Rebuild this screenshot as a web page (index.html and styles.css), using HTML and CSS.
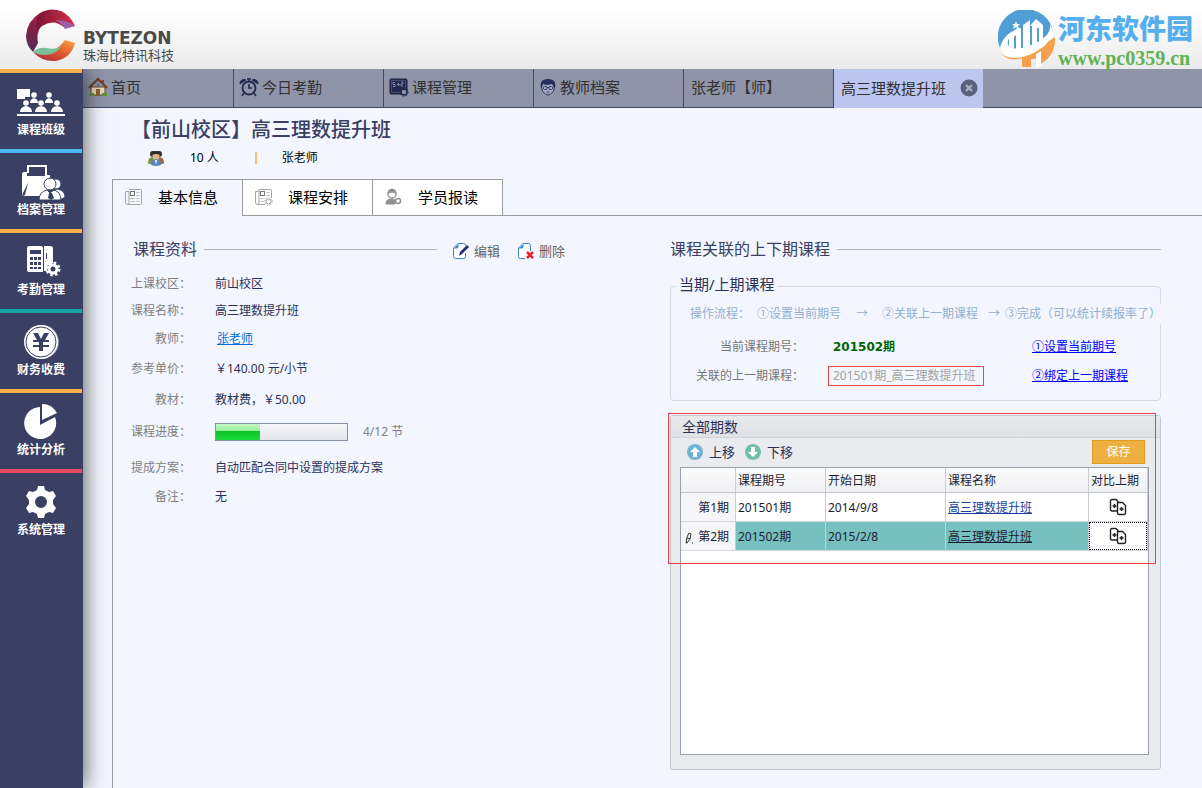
FILE: index.html
```html
<!DOCTYPE html>
<html lang="zh-CN">
<head>
<meta charset="utf-8">
<title>高三理数提升班</title>
<link rel="stylesheet" href="styles.css">
</head>
<body>
<header class="topbar">
  <div class="brand">
    <svg class="brand-mark" viewBox="0 0 52 54" aria-hidden="true">
      <defs>
        <linearGradient id="g1" x1="0" y1="0" x2="1" y2="0"><stop offset="0" stop-color="#7a1537"/><stop offset="1" stop-color="#d8304a"/></linearGradient>
        <linearGradient id="g2" x1="0" y1="0" x2="0" y2="1"><stop offset="0" stop-color="#a81a40"/><stop offset="1" stop-color="#4e2c52"/></linearGradient>
        <linearGradient id="g3" x1="0" y1="1" x2="1" y2="0"><stop offset="0" stop-color="#a8203c"/><stop offset=".5" stop-color="#d9542f"/><stop offset="1" stop-color="#fda83c"/></linearGradient>
      </defs>
      <path d="M15 5Q2 13 1 28Q1 37 8 44L13 35Q10 18 24 7Z" fill="url(#g2)"/>
      <path d="M15 5Q25 -1 36 3Q45 7 50 18L40 20Q29 10 17 18Q13 21 13 27Q9 13 15 5Z" fill="url(#g1)"/>
      <path d="M30 12Q42 12 50 18L40 21Q36 14 30 12Z" fill="#9a62aa"/>
      <path d="M50 35Q46 50 31 53Q17 54 8 44Q29 48 40 32Z" fill="url(#g3)"/>
      <path d="M8 44Q13 39 21 40Q29 42 36 39Q30 47 20 47Q13 47 8 44Z" fill="#7bbf98"/>
    </svg>
    <div class="brand-text">
      <span class="brand-name">BYTEZON</span>
      <span class="brand-sub">珠海比特讯科技</span>
    </div>
  </div>
  <div class="partner">
    <svg class="partner-mark" viewBox="0 0 58 58" aria-hidden="true">
      <path d="M2 38A28 28 0 0 1 52 13Q55 18 54 22L30 40Z" fill="#4f9fd6"/>
      <path d="M57 27Q58 48 38 56V49H33V57H24V48Q14 52 6 46Q3 43 2 38Q20 48 38 38Q52 31 57 27Z" fill="#f4a04c"/>
      <path d="M11 38V26L19 18L23 18V39H18V25L16 27V38Z" fill="#fff"/>
      <path d="M25 38V15L32 10V36ZM34 35V16H32L38 9L45 15V30L41 33V18H39V34Z" fill="#fff"/>
      <path d="M2 38Q5 24 20 19Q8 28 10 35Q16 43 38 33Q54 25 52 14Q59 25 45 37Q26 51 10 47Q3 45 2 38Z" fill="#fff"/>
      <path d="M38 44l5-3v15l-5 2Z" fill="#fff"/>
      <path d="M18 11l1 3h3l-2 2 1 3-3-2-3 2 1-3-2-2h3Z" fill="#fff"/>
    </svg>
    <div class="partner-text">
      <span class="partner-name">河东软件园</span>
      <span class="partner-url">www.pc0359.cn</span>
    </div>
  </div>
</header>

<div class="shell">
  <nav class="sidebar" aria-label="主导航">
    <a class="side-item orange" href="#">
      <svg viewBox="0 0 48 36" aria-hidden="true" fill="#fff"><path d="M0 5h13v8H8v2H0Z"/><circle cx="17" cy="11" r="2.800"/><circle cx="32" cy="11" r="2.800"/><path d="M13 19q0-4 4-5 4 1 4 5Zm15 0q0-4 4-5 4 1 4 5Z"/><circle cx="9" cy="19" r="2.800"/><circle cx="24" cy="19" r="2.800"/><circle cx="40" cy="19" r="2.800"/><path d="M3 28q0-5 6-6 6 1 6 6Zm15 0q0-5 6-6 6 1 6 6Zm16 0q0-5 6-6 6 1 6 6ZM0 30h48v2H0Z"/></svg>
      <span>课程班级</span>
    </a>
    <a class="side-item blue" href="#">
      <svg viewBox="0 0 48 36" aria-hidden="true" fill="#fff"><path d="M11 9V2h18v9" fill="none" stroke="#fff" stroke-width="2"/><path d="M5 32V10q0-2 2-2h3v4h18v-1h5v5l-21 1-6 12Z"/><path d="M8 31l4-16h25v4L25 32H6Z"/><g stroke="#394063"><circle cx="39" cy="20" r="5"/><path d="M35 35q-1-9 5-10 8 1 8 8l-3 2Z"/><circle cx="33" cy="20" r="6"/><path d="M22 36q0-8 8-10l3 3 4-3q7 2 7 10Z"/></g><path d="M32 29h3l2 5-3 2-3-2Z" fill="#394063"/></svg>
      <span>档案管理</span>
    </a>
    <a class="side-item orange" href="#">
      <svg viewBox="0 0 48 36" aria-hidden="true"><path d="M10 4q0-2 2-2h12q2 0 2 2v24H12q-2 0-2-2ZM27 2h6q3 0 3 2v15l-6 3v5h-3Z" fill="#fff"/><path d="M13 6h11v4H13ZM13 13h3v3h-3Zm4 0h3v3h-3Zm4 0h3v3h-3Zm-8 5h3v3h-3Zm4 0h3v3h-3Zm4 0h3v3h-3Zm-8 5h3v2h-3Zm4 0h3v2h-3Zm4 0h3v2h-3ZM29 9h1v6h-1Z" fill="#394063"/><circle cx="36" cy="25" r="4" fill="none" stroke="#fff" stroke-width="3"/><circle cx="36" cy="25" r="6" fill="none" stroke="#fff" stroke-width="3" stroke-dasharray="2.4 2.3"/></svg>
      <span>考勤管理</span>
    </a>
    <a class="side-item teal" href="#">
      <svg viewBox="0 0 48 36" aria-hidden="true"><circle cx="25" cy="18" r="17" fill="#8b90a5"/><circle cx="24" cy="18" r="17" fill="#fff"/><circle cx="24" cy="18" r="15" fill="none" stroke="#394063"/><path d="M16 9h5l3 6 3-6h5l-4 7h4v2h-6v3h6v2h-6v4h-4v-4h-6v-2h6v-3h-6v-2h4Z" fill="#394063"/></svg>
      <span>财务收费</span>
    </a>
    <a class="side-item orange" href="#">
      <svg viewBox="0 0 48 36" aria-hidden="true" fill="#fff"><path d="M23 3v18l15-8A16 16 0 1 1 23 3Z"/><path d="M25 0q10 0 15 9l-15 7Z"/></svg>
      <span>统计分析</span>
    </a>
    <a class="side-item red" href="#">
      <svg viewBox="0 0 48 36" aria-hidden="true"><path fill="#fff" fill-rule="evenodd" d="M21 2h6l1 4 4 2 4-1 3 5-3 4v4l3 4-3 5-4-1-4 2-1 4h-6l-1-4-4-2-4 1-3-5 3-4v-4l-3-4 3-5 4 1 4-2ZM24 12a6 6 0 1 0 0 12 6 6 0 0 0 0-12Z"/></svg>
      <span>系统管理</span>
    </a>
  </nav>

  <div class="main">
    <nav class="window-tabs" aria-label="窗口">
      <a class="window-tab" href="#">
        <svg class="tab-icon" viewBox="0 0 20 20" aria-hidden="true"><path d="M3 10h14v8H3Z" fill="#e8d8b8" stroke="#67442a"/><path d="M1 11 10 2l9 9" fill="none" stroke="#6d4529" stroke-width="2.4"/><path d="M14 3h2v4h-2Z" fill="#8c3f28"/><path d="M8 12h4v7H8Z" fill="#8d5e30"/><path d="M1 16h5v3H1Zm13 0h5v3h-5Z" fill="#5d9736"/><circle cx="10" cy="8" r="1.4" fill="#59728a"/></svg>
        <span>首页</span>
      </a>
      <a class="window-tab" href="#">
        <svg class="tab-icon" viewBox="0 0 20 20" fill="none" stroke="#232a50" aria-hidden="true"><circle cx="10" cy="11" r="6.5" stroke-width="1.8"/><path d="M10 7v4h3M5 16l-2 3M15 16l2 3M8 2h4M10 2v2" stroke-width="1.6"/><path d="M1 7a4 4 0 0 1 6-4ZM19 7a4 4 0 0 0-6-4Z" fill="#232a50"/></svg>
        <span>今日考勤</span>
      </a>
      <a class="window-tab" href="#">
        <svg class="tab-icon" viewBox="0 0 20 20" fill="none" aria-hidden="true"><rect x="1" y="2" width="17" height="15" rx="1" fill="#232a50" stroke="#1c2240"/><path d="M2.500 3.500h14v12h-14Z" stroke="#5d6488" stroke-width=".6"/><path d="M6 5.500H4v2h2v2H4M8 7.500h3M9.500 6v3M12 5h2v2h-2v2h2" stroke="#8f96b4" stroke-width=".8"/><circle cx="15" cy="15" r="3" fill="#9094a9" stroke="#232a50" stroke-width="1.600"/><circle cx="15" cy="15" r="4.300" stroke="#232a50" stroke-dasharray="1.500 1.800"/></svg>
        <span>课程管理</span>
      </a>
      <a class="window-tab" href="#">
        <svg class="tab-icon small" viewBox="0 0 16 18" fill="none" aria-hidden="true"><path d="M1.500 9q-1-7 6.500-7t6.500 7q0 5-4 7-2.500 2-5 0-4-2-4-7Z" fill="#a9afc9" stroke="#27305c"/><path d="M1 10Q-1 1 8 1t7 9h-1l-2-4Q7 8 3 6L2 10Z" fill="#27305c"/><rect x="3.500" y="8.500" width="3.500" height="3" rx="1" stroke="#27305c"/><rect x="9" y="8.500" width="3.500" height="3" rx="1" stroke="#27305c"/><path d="M7 9.500h2M6.500 14h3" stroke="#27305c"/></svg>
        <span>教师档案</span>
      </a>
      <a class="window-tab" href="#"><span>张老师【师】</span></a>
      <div class="window-tab active">
        <a href="#">高三理数提升班</a>
        <button class="close" type="button" aria-label="关闭"><svg viewBox="0 0 18 18" aria-hidden="true"><circle cx="9" cy="9" r="8.500" fill="#5c617b"/><path d="M6 6l6 6M12 6l-6 6" stroke="#a8aec9" stroke-width="2.400"/></svg></button>
      </div>
    </nav>

    <main class="page">
      <h1 class="title">【前山校区】高三理数提升班</h1>
      <div class="summary">
        <svg class="people" viewBox="0 0 16 16" aria-hidden="true"><circle cx="5" cy="4" r="3" fill="#35302e"/><circle cx="11" cy="4" r="3" fill="#35302e"/><path d="M0 13q0-6 5-6l2 7H1Z" fill="#769447"/><path d="M16 13q0-6-5-6l-2 7h6Z" fill="#9a6a48"/><circle cx="8" cy="6" r="3.600" fill="#e0b789"/><path d="M4 5q0-4 4-4t4 4Q8 3 4 5Z" fill="#302a29"/><path d="M3 15q0-6 5-6t5 6q-5 2-10 0Z" fill="#5488c0"/><path d="M7 10h2l-1 5Z" fill="#fff"/></svg>
        <span class="count">10 人</span>
        <span class="divider"></span>
        <span>张老师</span>
      </div>

      <div class="detail-tabs" role="tablist">
        <button class="detail-tab selected" type="button" role="tab" aria-selected="true">
          <svg viewBox="0 0 18 18" fill="none" stroke="#a5a5a5" aria-hidden="true"><path d="M4 1.500h11.500q1 0 1 1v13q0 1-1 1h-13q-2 0-2-2v-11H4v11q0 2-1.500 2" /><rect x="5.500" y="3.500" width="4" height="4" stroke="#777"/><path d="M11.500 4.500h3M11.500 7.500h3M5.500 10.500h4M11.500 10.500h3M5.500 13.500h4M11.500 13.500h3" stroke="#bbb"/></svg>
          <span>基本信息</span>
        </button>
        <button class="detail-tab" type="button" role="tab">
          <svg viewBox="0 0 18 18" fill="none" stroke="#a5a5a5" aria-hidden="true"><path d="M10 16.500H2.500q-2 0-2-2v-11H4v11q0 2-1.500 2M4 3.500v-2h11.500q1 0 1 1V10"/><rect x="5.500" y="3.500" width="4" height="4" stroke="#777"/><path d="M11.500 4.500h3M11.500 7.500h3M5.500 10.500h4M5.500 13.500h3" stroke="#bbb"/><circle cx="13.500" cy="13.500" r="2.500"/><circle cx="13.500" cy="13.500" r="3.700" stroke-dasharray="1.500 1.400"/></svg>
          <span>课程安排</span>
        </button>
        <button class="detail-tab" type="button" role="tab">
          <svg viewBox="0 0 18 18" fill="none" stroke="#929292" aria-hidden="true"><circle cx="7" cy="6" r="4" stroke-width="1.500"/><path d="M3 5q0-4 4-4t4 4Q7 3 3 5Z" fill="#929292"/><path d="M1 16q0-5 5-5 3 0 4 1v4Z" fill="#929292"/><circle cx="13" cy="13" r="2.500" fill="#fff" stroke-width="1.500"/></svg>
          <span>学员报读</span>
        </button>
        <span class="tab-line"></span>
      </div>

      <div class="pane">
        <section class="info">
          <div class="section-head">
            <h2>课程资料</h2><span class="rule"></span>
            <div class="actions">
              <button class="action" type="button"><svg viewBox="0 0 16 16" aria-hidden="true"><path d="M12.500 10v3.500q0 2-2 2h-8q-2 0-2-2V5L5 .500h5.500q2 0 2 2" fill="#fff" stroke="#3f84c5"/><path d="M1 5.500h2.500q2 0 2-2V1Z" fill="#3f84c5"/><path d="M6 13l1-4 7-7 2 2-7 7Z" fill="#252b6d"/></svg><span>编辑</span></button>
              <button class="action" type="button"><svg viewBox="0 0 16 16" aria-hidden="true"><path d="M7 15.500H2.500q-2 0-2-2V5L5 .500h5.500q2 0 2 2V8" fill="#fff" stroke="#3f84c5"/><path d="M1 5.500h2.500q2 0 2-2V1Z" fill="#3f84c5"/><path d="M9 9l6 6M15 9l-6 6" stroke="#ed242b" stroke-width="2.500"/></svg><span>删除</span></button>
            </div>
          </div>
          <dl class="fields">
            <dt>上课校区：</dt><dd>前山校区</dd>
            <dt>课程名称：</dt><dd>高三理数提升班</dd>
            <dt>教师：</dt><dd><a class="teacher" href="#">张老师</a></dd>
            <dt>参考单价：</dt><dd>￥140.00 元/小节</dd>
            <dt>教材：</dt><dd>教材费，￥50.00</dd>
            <dt id="progress-label">课程进度：</dt><dd class="progress-row"><progress max="12" value="4" aria-labelledby="progress-label"></progress><span>4/12 节</span></dd>
            <dt>提成方案：</dt><dd>自动匹配合同中设置的提成方案</dd>
            <dt>备注：</dt><dd>无</dd>
          </dl>
        </section>

        <section class="related">
          <div class="section-head"><h2>课程关联的上下期课程</h2><span class="rule"></span></div>
          <fieldset class="link-box">
            <legend>当期/上期课程</legend>
            <div class="steps"><span class="steps-label">操作流程：</span><span>①设置当前期号</span><span class="arrow-wide">→</span><span>②关联上一期课程</span><span class="arrow">→</span><span>③完成（可以统计续报率了）</span></div>
            <div class="link-grid">
              <span class="link-label">当前课程期号：</span><span class="current">201502期</span><a href="#">①设置当前期号</a>
              <span class="link-label">关联的上一期课程：</span><span class="previous">201501期_高三理数提升班</span><a href="#">②绑定上一期课程</a>
            </div>
          </fieldset>

          <div class="terms">
            <h3>全部期数</h3>
            <div class="toolbar">
              <button class="move" type="button"><svg viewBox="0 0 16 16" aria-hidden="true"><circle cx="8" cy="8" r="8" fill="#72b2d6"/><path d="M8 3l5 5h-3v5H6V8H3Z" fill="#fff"/></svg><span>上移</span></button>
              <button class="move" type="button"><svg viewBox="0 0 16 16" aria-hidden="true"><circle cx="8" cy="8" r="8" fill="#70c0a6"/><path d="M8 13l5-5h-3V3H6v5H3Z" fill="#fff"/></svg><span>下移</span></button>
              <button class="save" type="button">保存</button>
            </div>
            <div class="grid-box">
              <table>
                <colgroup><col class="c-index"><col class="c-term"><col class="c-date"><col class="c-name"><col class="c-compare"></colgroup>
                <thead><tr><td></td><th scope="col">课程期号</th><th scope="col">开始日期</th><th scope="col">课程名称</th><th scope="col">对比上期</th></tr></thead>
                <tbody>
                  <tr><th scope="row"><span>第1期</span></th><td>201501期</td><td>2014/9/8</td><td><a href="#">高三理数提升班</a></td>
                    <td class="compare"><button type="button" aria-label="对比上期"><svg viewBox="0 0 18 18" fill="#fff" stroke="#222" stroke-width="1.400" aria-hidden="true"><path d="M1.500 3q0-1.500 1.500-1.500h4l2 2V13H3q-1.500 0-1.500-1.500Z"/><path d="M8.500 4.500h5l3 3V15q0 1.500-1.500 1.500h-5q-1.500 0-1.500-1.500Z"/><path d="M3.500 8h4M5.500 6v4M10.500 11h4M12.500 9v4" stroke-width="1.600"/></svg></button></td></tr>
                  <tr class="chosen"><th scope="row"><svg class="pencil" viewBox="0 0 8 12" fill="none" stroke="#333" aria-hidden="true"><path d="M1 11l1-6 2-4 2 1-1 5-3 4ZM2 6l3 1M7 11h1"/></svg><span>第2期</span></th><td>201502期</td><td>2015/2/8</td><td><a href="#">高三理数提升班</a></td>
                    <td class="compare"><button type="button" aria-label="对比上期"><svg viewBox="0 0 18 18" fill="#fff" stroke="#222" stroke-width="1.400" aria-hidden="true"><path d="M1.500 3q0-1.500 1.500-1.500h4l2 2V13H3q-1.500 0-1.500-1.500Z"/><path d="M8.500 4.500h5l3 3V15q0 1.500-1.500 1.500h-5q-1.500 0-1.500-1.500Z"/><path d="M3.500 8h4M5.500 6v4M10.500 11h4M12.500 9v4" stroke-width="1.600"/></svg></button></td></tr>
                </tbody>
              </table>
            </div>
            <div class="marker"></div>
          </div>
        </section>
      </div>
    </main>
  </div>
</div>
</body>
</html>
```
FILE: styles.css
```css
* { box-sizing: border-box; }

body {
  margin: 0;
  min-height: 100vh;
  display: flex;
  flex-direction: column;
  background: #f3f6fe;
  color: #2b3158;
  font: 12px/20px "Noto Sans", "Noto Sans CJK SC", sans-serif;
}

h1, h2, h3, dl, dd { margin: 0; font-weight: normal; }
button { font: inherit; color: inherit; border: 0; padding: 0; background: none; cursor: pointer; }
svg { display: block; flex: none; }

/* Header */
.topbar {
  position: relative;
  z-index: 2;
  height: 69px;
  display: flex;
  justify-content: space-between;
  padding: 8px 9px 0 25px;
  background: linear-gradient(#fff 15%, #ebebeb);
}
.brand, .partner { display: flex; align-items: flex-start; }
.brand { gap: 6px; }
.brand-mark { width: 52px; height: 54px; }
.brand-text { display: flex; flex-direction: column; padding-top: 21px; color: #4a4a4a; }
.brand-name { font: bold 17px/18px "DejaVu Sans", sans-serif; }
.brand-sub { font-size: 13px; line-height: 16px; }
.partner { gap: 2px; padding-top: 2px; }
.partner-mark { width: 58px; height: 58px; }
.partner-text { display: flex; flex-direction: column; }
.partner-name { font-size: 27px; line-height: 38px; font-weight: 900; color: #55aeed; }
.partner-url { font: bold 20px/20px "Liberation Serif", serif; color: #62b154; }

.shell { flex: 1; display: flex; }

/* Sidebar */
.sidebar {
  position: relative;
  z-index: 1;
  width: 83px;
  flex: none;
  padding-right: 1px;
  background: #394063;
  box-shadow: 2px 0 20px rgba(0, 0, 0, .6);
}
.side-item {
  height: 80px;
  display: flex;
  flex-direction: column;
  align-items: center;
  padding-top: 11px;
  border-top: 4px solid;
  text-decoration: none;
}
.side-item svg { width: 48px; height: 36px; }
.side-item span { color: #fff; font-weight: bold; line-height: 20px; }
.orange { border-color: #fbb04c; }
.blue { border-color: #4cb8ee; }
.teal { border-color: #17a5a5; }
.red { border-color: #e84a62; }

.main { flex: 1; min-width: 0; display: flex; flex-direction: column; }

/* Window tabs */
.window-tabs { display: flex; height: 39px; background: #9094a9; box-shadow: inset 0 -1px #414a6c; }
.window-tab {
  width: 150px;
  display: flex;
  align-items: center;
  gap: 3px;
  padding: 0 5px 4px;
  border-left: 1px solid #414a6c;
  color: #303030;
  font-size: 15px;
  white-space: nowrap;
  text-decoration: none;
}
.window-tab:first-child { padding-left: 4px; border-left-color: transparent; }
.window-tab:nth-child(5), .window-tab.active { padding-left: 7px; }
.window-tab.active { justify-content: space-between; padding-bottom: 2px; background: #bdc6ee; }
.window-tab.active a { color: inherit; text-decoration: none; }
.tab-icon { width: 20px; height: 20px; }
.tab-icon.small { width: 16px; height: 18px; margin: 0 1px; }
.close svg { width: 18px; height: 18px; }

/* Page heading */
.page { flex: 1; display: flex; flex-direction: column; padding: 8px 0 0 29px; }
.title { padding-left: 19px; font-size: 20px; line-height: 28px; font-weight: 500; color: #394063; }
.summary { display: flex; align-items: center; height: 28px; padding-left: 36px; margin-bottom: 7px; color: #000; }
.people { width: 16px; height: 16px; }
.count { margin-left: 26px; }
.divider { width: 2px; height: 12px; margin: 0 25px 0 36px; background: #fbbd75; }

/* Detail tabs */
.detail-tabs { display: flex; height: 37px; }
.detail-tab {
  width: 130px;
  display: flex;
  align-items: center;
  gap: 15px;
  padding: 0 0 2px 12px;
  border: 1px solid #9b9b9b;
  border-right: 0;
  background: #fff;
  color: #000;
  font-size: 15px;
}
.detail-tab.selected { border-bottom: 0; background: none; }
.detail-tab svg { width: 18px; height: 18px; }
.tab-line { flex: 1; border-left: 1px solid #9b9b9b; border-bottom: 1px solid #9b9b9b; }

.pane {
  flex: 1;
  display: grid;
  grid-template-columns: minmax(0, 434fr) minmax(0, 491fr);
  gap: 105px;
  padding: 21px 41px 18px 18px;
  border-left: 1px solid #9b9b9b;
}

.section-head { display: flex; align-items: center; height: 24px; }
.section-head h2 { font-size: 16px; line-height: 24px; color: #394063; white-space: nowrap; }
.rule { flex: 1; height: 1px; margin-left: 7px; background: #b7b7bb; }
.info .section-head { padding-left: 2px; }
.actions { display: flex; gap: 18px; margin-left: 16px; padding-top: 3px; }
.action { display: flex; align-items: center; gap: 5px; font-size: 13px; color: #666; }
.action svg { width: 16px; height: 16px; }

.fields {
  display: grid;
  grid-template-columns: 60px 1fr;
  grid-template-rows: 28px 26px 30px 30px 32px 32px 40px 18px;
  column-gap: 24px;
  align-items: center;
  margin-top: 9px;
  white-space: nowrap;
}
.fields dt { text-align: right; color: #808080; }
.teacher { margin-left: 2px; color: #0070d8; }
.progress-row { display: flex; align-items: center; gap: 15px; color: #808080; }
progress { appearance: none; width: 133px; height: 18px; border: 1px solid #8592a5; }
progress::-webkit-progress-bar { background: linear-gradient(#f7f7f8, #e2e5ea); }
progress::-webkit-progress-value { background: linear-gradient(#c4f8c4, #9af09c 42%, #0fc32c 46%, #1bdc3b); }

/* Current and previous term */
.link-box {
  min-width: 0;
  margin: 13px 0 0;
  padding: 6px 0 10px;
  border: 1px solid #d5dbe2;
  border-radius: 4px;
}
.link-box legend { margin-left: 5px; padding: 0 3px 4px; font-size: 15px; line-height: 20px; }
.steps { display: flex; padding-left: 19px; margin-right: -1px; white-space: nowrap; color: #92afd0; }
.steps span { background: #f3f6fe; }
.steps-label { margin-right: 7px; }
.arrow-wide { margin: 0 14px 0 15px; }
.arrow { margin: 0 5px 0 10px; }
.link-grid {
  display: grid;
  grid-template-columns: 114px 180px auto;
  grid-auto-rows: 29px;
  column-gap: 24px;
  align-items: center;
  justify-content: start;
  padding-left: 19px;
  margin-top: 8px;
  white-space: nowrap;
}
.link-grid a { color: #00f; }
.link-label { text-align: right; color: #777; }
.current { padding-left: 5px; color: #006400; font-family: "DejaVu Sans", "Noto Sans CJK SC", sans-serif; font-weight: bold; }
.previous { justify-self: start; min-width: 156px; padding: 0 4px; border: 1px solid #f04848; line-height: 18px; color: #a2a2a2; }

/* All terms */
.terms { position: relative; margin-top: 14px; border: 1px solid #c2c6cf; border-radius: 3px; background: #e9ebef; }
.terms h3 {
  height: 22px;
  padding-left: 11px;
  border-bottom: 1px solid #d0d3da;
  background: linear-gradient(#e8e9ed, #dfe1e5);
  font-size: 14px;
  line-height: 22px;
}
.toolbar { display: flex; align-items: center; gap: 10px; height: 29px; padding: 0 15px 1px 16px; }
.move { display: flex; align-items: center; gap: 6px; font-size: 13px; }
.move svg { width: 16px; height: 16px; }
.save { width: 53px; height: 24px; margin-left: auto; border: 1px solid #e39b1c; background: #ecb141; color: #fff; }
.grid-box { min-height: 288px; margin: 0 11px 14px 9px; border: 1px solid #9a9fae; background: #fff; }
.marker { position: absolute; top: -3px; left: -3px; right: 4px; height: 151px; border: 1px solid #f13d43; pointer-events: none; }

table { width: 100%; table-layout: fixed; border-collapse: separate; border-spacing: 0; color: #1c1c34; }
.c-index { width: 55px; }
.c-term { width: 90px; }
.c-date { width: 120px; }
.c-compare { width: 59px; }
th, td {
  height: 29px;
  padding: 2px 2px 0;
  border-right: 1px solid #c9ccd4;
  border-bottom: 1px solid #d4d6dc;
  text-align: left;
  font-weight: normal;
  white-space: nowrap;
}
thead th, thead td { height: 25px; background: linear-gradient(#fafafb, #eff0f2); border-bottom-color: #c0c3cc; }
tbody th { padding: 2px 6px 0 0; background: #f6f6f8; text-align: right; }
tbody a { color: #1a3f9c; }
.pencil { display: inline-block; width: 8px; height: 12px; margin-right: 5px; vertical-align: middle; }
.chosen td { background: #76c0c0; }
.chosen a { color: #1c1c34; }
td.compare { padding: 0; }
.compare button { display: flex; align-items: center; justify-content: center; width: 100%; height: 28px; }
.compare svg { width: 18px; height: 18px; }
.chosen .compare { background: #fff; }
.chosen .compare button { border: 1px dotted #000; }
```
